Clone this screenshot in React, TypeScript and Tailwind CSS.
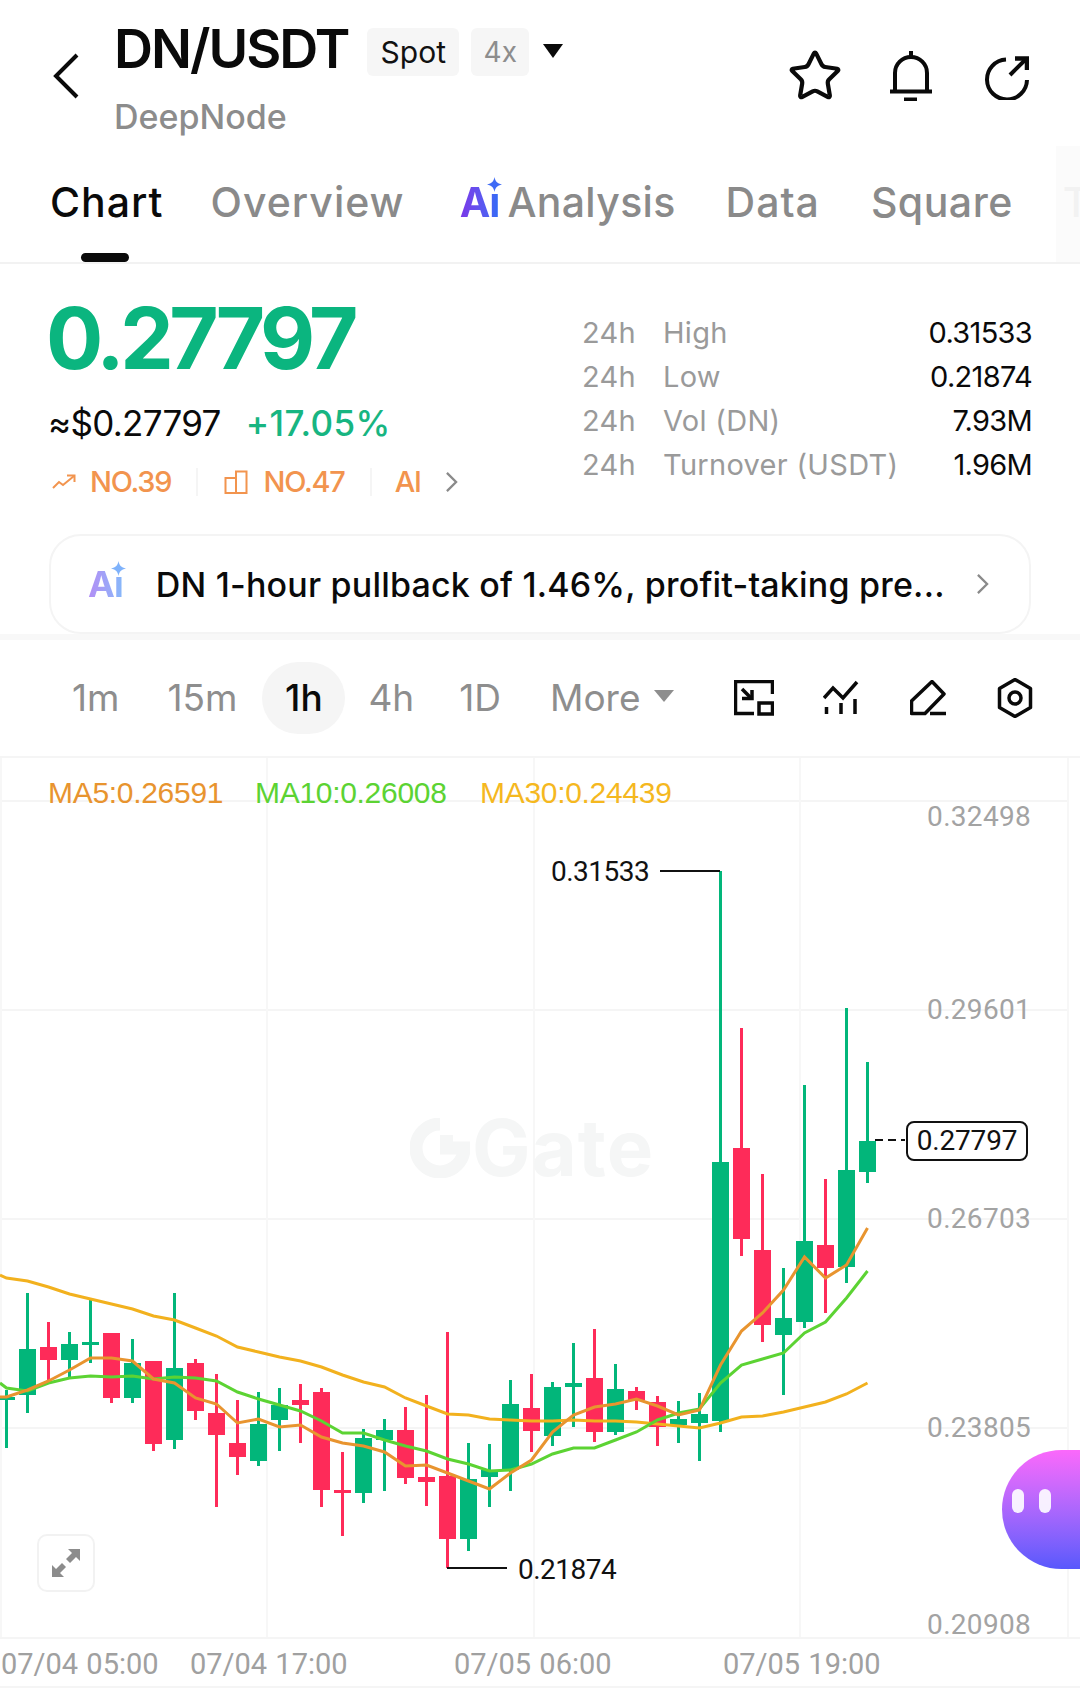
import { Star } from 'lucide-react'
import clsx from 'clsx'

const GREEN = '#02b67a'
const RED = '#fe2b59'

// wick top, body top, body bottom, wick bottom, up
const candles: [number, number, number, number, boolean][] = [
  [1390, 1397, 1400, 1448, true],
  [1293, 1349, 1395, 1413, true],
  [1322, 1347, 1360, 1380, false],
  [1332, 1344, 1360, 1378, true],
  [1300, 1342, 1345, 1363, true],
  [1333, 1333, 1398, 1403, false],
  [1339, 1363, 1398, 1403, true],
  [1361, 1361, 1444, 1451, false],
  [1293, 1368, 1440, 1449, true],
  [1359, 1363, 1411, 1420, false],
  [1374, 1413, 1435, 1507, false],
  [1400, 1443, 1457, 1475, false],
  [1392, 1424, 1461, 1466, true],
  [1388, 1405, 1420, 1451, true],
  [1384, 1400, 1405, 1443, false],
  [1388, 1392, 1490, 1507, false],
  [1452, 1490, 1493, 1536, false],
  [1429, 1438, 1493, 1503, true],
  [1419, 1430, 1440, 1491, true],
  [1407, 1430, 1478, 1484, false],
  [1395, 1477, 1482, 1506, false],
  [1332, 1476, 1539, 1568, false],
  [1443, 1479, 1539, 1551, true],
  [1444, 1470, 1477, 1507, true],
  [1380, 1404, 1470, 1491, true],
  [1374, 1408, 1431, 1452, false],
  [1382, 1387, 1436, 1446, true],
  [1343, 1383, 1387, 1427, true],
  [1329, 1378, 1432, 1442, false],
  [1364, 1389, 1432, 1435, true],
  [1387, 1391, 1400, 1410, false],
  [1396, 1402, 1427, 1446, false],
  [1401, 1419, 1425, 1443, true],
  [1393, 1414, 1423, 1461, true],
  [871, 1162, 1421, 1432, true],
  [1028, 1148, 1239, 1256, false],
  [1174, 1250, 1325, 1342, false],
  [1268, 1318, 1335, 1395, true],
  [1085, 1241, 1322, 1328, true],
  [1179, 1245, 1268, 1313, false],
  [1008, 1170, 1267, 1283, true],
  [1062, 1141, 1172, 1183, true],
]

const ma30 = [1278, 1281, 1287, 1294, 1299, 1304, 1309, 1316, 1320, 1328, 1336, 1347, 1352, 1357, 1361, 1367, 1375, 1382, 1387, 1398, 1406, 1414, 1415, 1419, 1420, 1421, 1421, 1420, 1421, 1421, 1422, 1424, 1426, 1428, 1423, 1417, 1416, 1412, 1407, 1402, 1394, 1383]
const ma10 = [1388, 1391, 1383, 1378, 1376, 1377, 1376, 1379, 1377, 1378, 1381, 1392, 1399, 1405, 1411, 1421, 1433, 1433, 1440, 1446, 1451, 1459, 1464, 1471, 1470, 1464, 1454, 1448, 1448, 1440, 1432, 1420, 1413, 1409, 1383, 1365, 1359, 1353, 1333, 1322, 1298, 1271]
const ma5 = [1397, 1390, 1381, 1370, 1358, 1358, 1361, 1379, 1383, 1398, 1404, 1423, 1419, 1427, 1425, 1437, 1443, 1446, 1452, 1466, 1465, 1473, 1481, 1489, 1473, 1460, 1432, 1415, 1407, 1404, 1399, 1406, 1415, 1410, 1365, 1331, 1313, 1290, 1257, 1278, 1265, 1228]

const candleX = (i: number) => 6.5 + 21 * i
const linePoints = (ys: number[], startY: number) =>
  `0,${startY} ` + ys.map((y, i) => `${candleX(i)},${y}`).join(' ')

// top is measured from the top of the chart box
const priceAxis = [
  { label: '0.32498', top: 42 },
  { label: '0.29601', top: 235 },
  { label: '0.26703', top: 444 },
  { label: '0.23805', top: 653 },
  { label: '0.20908', top: 850 },
]

const timeAxis = [
  { label: '07/04 05:00', left: 1 },
  { label: '07/04 17:00', left: 190 },
  { label: '07/05 06:00', left: 454 },
  { label: '07/05 19:00', left: 723 },
]

function AiMark({ className, gradient }: { className?: string; gradient: string }) {
  return (
    <span className={clsx('relative inline-block font-bold leading-none', className)}>
      <span className={clsx('bg-clip-text tracking-[-1px] text-transparent', gradient)}>Aı</span>
      <svg viewBox="0 0 16 16" className="absolute right-[-3px] top-[-5px] h-[15px] w-[15px]">
        <path d="M8 0C8.8 4.6 10.8 7 16 8C10.8 9 8.8 11.4 8 16C7.2 11.4 5.2 9 0 8C5.2 7 7.2 4.6 8 0Z" fill="currentColor" />
      </svg>
    </span>
  )
}

function Chevron({ className }: { className?: string }) {
  return (
    <svg viewBox="0 0 14 24" fill="none" stroke="#8a8a8a" strokeWidth="2.500" className={clsx('h-[22px] w-[13px]', className)}>
      <path d="M2 2L12 12L2 22" />
    </svg>
  )
}

function Header() {
  return (
    <header className="flex h-[146px] items-start pl-[53px] pr-[51px]">
      <svg viewBox="0 0 26 46" fill="none" stroke="#0a0a0a" strokeWidth="4" className="mr-[35px] mt-[53px] h-[46px] w-[26px] shrink-0">
        <path d="M24 2L3 23L24 44" />
      </svg>
      <div className="mt-[18px]">
        <div className="flex items-start">
          <h1 className="text-[54px] font-semibold leading-[62px] tracking-[-2px] text-[#0a0a0a]">DN/USDT</h1>
          <span className="ml-[19px] mt-[10px] flex h-[48px] w-[92px] items-center justify-center rounded-[6px] bg-[#f6f6f6] text-[30px] text-[#111]">Spot</span>
          <span className="ml-[12px] mt-[10px] flex h-[48px] w-[58px] items-center justify-center rounded-[6px] bg-[#f6f6f6] text-[28px] text-[#8d8d8d]">4x</span>
          <svg viewBox="0 0 20 14" className="ml-[14px] mt-[26px] h-[14px] w-[20px]">
            <path d="M0 0H20L10 14Z" fill="#0a0a0a" />
          </svg>
        </div>
        <div className="mt-[17px] text-[34px] font-medium leading-[40px] text-[#8c8c8c]">DeepNode</div>
      </div>
      <div className="ml-auto mt-[48px] flex items-center">
        <Star size={56} strokeWidth={1.8} className="text-[#0a0a0a]" />
        <svg viewBox="0 0 44 50" fill="none" stroke="#0a0a0a" strokeWidth="4" className="ml-[46px] h-[50px] w-[44px]">
          <path d="M22 0V6" />
          <path d="M6 40V22a16 16 0 0 1 32 0v18" />
          <path d="M1 40.500H43" />
          <path d="M15 48.500H28" />
        </svg>
        <svg viewBox="0 0 44 44" fill="none" stroke="#0a0a0a" strokeWidth="4" className="ml-[52px] mt-[3px] h-[44px] w-[44px]">
          <path d="M21 3.500A20 20 0 1 0 42 24" />
          <path d="M25 19L41 3" />
          <path d="M30 2.500H42V14" strokeWidth="4.500" />
        </svg>
      </div>
    </header>
  )
}

function Tabs() {
  return (
    <nav className="relative flex h-[118px] items-start overflow-hidden border-b-2 border-[#f2f2f2] pl-[50px] pt-[32px] text-[41px] font-medium leading-[48px] tracking-[1px] text-[#8a8a8a]">
      <div className="text-[#0a0a0a]">Chart</div>
      <div className="ml-[47px]">Overview</div>
      <div className="ml-[55px] flex items-center">
        <AiMark className="text-[#3f6bf5]" gradient="bg-gradient-to-r from-[#7a35e8] to-[#2f6bf6]" />
        <span className="ml-[8px] tracking-[0.3px]">Analysis</span>
      </div>
      <div className="ml-[50px]">Data</div>
      <div className="ml-[51px] tracking-[0.5px]">Square</div>
      <div className="ml-[50px] text-[#d0d0d0]">T</div>
      <div className="absolute bottom-0 right-0 top-0 w-[24px] bg-[#fafafa]/80" />
      <div className="absolute bottom-0 left-[81px] h-[9px] w-[48px] rounded-[5px] bg-[#0a0a0a]" />
    </nav>
  )
}

function Stat({ label, value }: { label: string; value: string }) {
  return (
    <div className="flex h-[44px] items-center text-[29px] tracking-[0.3px]">
      <span className="w-[81px] text-[#9a9a9a]">24h</span>
      <span className="text-[#9a9a9a]">{label}</span>
      <span className="ml-auto tracking-[-0.7px] text-[#0a0a0a]">{value}</span>
    </div>
  )
}

function Summary() {
  return (
    <section className="flex h-[270px] justify-between pl-[49px] pr-[48px]">
      <div>
        <div className="ml-[-3px] mt-[27px] text-[85px] font-bold leading-[96px] tracking-[-4.5px] text-[#0bb57f]">0.27797</div>
        <div className="mt-[15px] flex items-center text-[35px] leading-[42px]">
          <span className="ml-[-1px] tracking-[-0.7px] text-[#0a0a0a]">≈$0.27797</span>
          <span className="ml-[25px] font-medium tracking-[0.4px] text-[#17b581]">+17.05%</span>
        </div>
        <div className="mt-[20px] flex items-center text-[29px] font-medium leading-[36px] tracking-[-1.2px] text-[#f2944e]">
          <svg viewBox="0 0 24 16" fill="none" stroke="currentColor" strokeWidth="2" className="ml-[3px] h-[16px] w-[24px]">
            <path d="M1 14L7 8L11 11L22 2" />
            <path d="M15 1.500H22.500V8" />
          </svg>
          <span className="ml-[14px]">NO.39</span>
          <span className="ml-[25px] h-[28px] w-[2px] bg-[#f5f5f5]" />
          <svg viewBox="0 0 24 24" fill="none" stroke="currentColor" strokeWidth="2" className="ml-[26px] h-[24px] w-[24px]">
            <path d="M12 8H1.500V23H22.500V1.500H12V23" />
          </svg>
          <span className="ml-[15px]">NO.47</span>
          <span className="ml-[25px] h-[28px] w-[2px] bg-[#f5f5f5]" />
          <span className="ml-[23px]">AI</span>
          <Chevron className="ml-[24px]" />
        </div>
      </div>
      <div className="mt-[47px] w-[450px]">
        <Stat label="High" value="0.31533" />
        <Stat label="Low" value="0.21874" />
        <Stat label="Vol (DN)" value="7.93M" />
        <Stat label="Turnover (USDT)" value="1.96M" />
      </div>
    </section>
  )
}

function Banner() {
  return (
    <div className="border-b-[6px] border-[#f8f8f8] px-[49px]">
      <div className="flex h-[100px] items-center rounded-[32px] border-2 border-[#f4f4f4] pl-[37px] pr-[40px]">
        <AiMark className="text-[36px] text-[#7fb2fb]" gradient="bg-gradient-to-r from-[#b28df5] to-[#85b8fa]" />
        <span className="ml-[33px] whitespace-nowrap text-[34px] font-medium tracking-[0.2px] text-[#0a0a0a]">
          DN 1-hour pullback of 1.46%, profit-taking pre...
        </span>
        <Chevron className="ml-auto" />
      </div>
    </div>
  )
}

function Toolbar() {
  return (
    <div className="flex h-[118px] items-center border-b-2 border-[#f5f5f5] text-[37px] text-[#8e8e8e]">
      <span className="ml-[72px]">1m</span>
      <span className="ml-[48px]">15m</span>
      <span className="ml-[25px] flex h-[72px] w-[83px] items-center justify-center rounded-full bg-[#f5f5f5] font-medium text-[#0a0a0a]">1h</span>
      <span className="ml-[23px]">4h</span>
      <span className="ml-[45px]">1D</span>
      <span className="ml-[49px]">More</span>
      <svg viewBox="0 0 20 12" className="mb-[4px] ml-[14px] h-[12px] w-[20px]">
        <path d="M0 0H20L10 12Z" fill="#8e8e8e" />
      </svg>
      <svg viewBox="0 0 40 36" fill="none" stroke="#0a0a0a" strokeWidth="3.500" className="ml-[60px] h-[36px] w-[40px]">
        <path d="M20 33.500H1.500V1.500H38.500V14" />
        <rect x="25" y="23" width="13.500" height="11" />
        <path d="M8 9L17 18" />
        <path d="M8 18.500H18V10" />
      </svg>
      <svg viewBox="0 0 36 36" fill="none" stroke="#0a0a0a" strokeWidth="3.500" className="ml-[49px] h-[36px] w-[36px]">
        <path d="M1 18L10 8L20 18L34 2" />
        <path d="M3.500 27V34M18 23V34M32 19V34" />
      </svg>
      <svg viewBox="0 0 36 36" fill="none" stroke="#0a0a0a" strokeWidth="3.500" className="ml-[51px] h-[36px] w-[36px]">
        <path d="M22 1.500L34 14L15 33.500H1.500V21Z" strokeLinejoin="round" />
        <path d="M20 33.500H36" />
      </svg>
      <svg viewBox="0 0 36 40" fill="none" stroke="#0a0a0a" strokeWidth="3.500" className="ml-[51px] h-[40px] w-[36px]">
        <path d="M18 1.500L33.500 10.500V29.500L18 38.500L2.500 29.500V10.500Z" strokeLinejoin="round" />
        <circle cx="18" cy="20" r="6" />
      </svg>
    </div>
  )
}

function CandleChart() {
  return (
    <svg viewBox="0 758 1080 879" className="absolute inset-0 h-full w-full">
      {[801, 1010, 1219, 1428].map((y) => (
        <line key={y} x1="0" x2="1068" y1={y} y2={y} stroke="#f5f5f5" strokeWidth="2" />
      ))}
      {[1, 267, 534, 800, 1068].map((x) => (
        <line key={x} x1={x} x2={x} y1="758" y2="1637" stroke="#f7f7f7" strokeWidth="2" />
      ))}
      {candles.map(([wickTop, bodyTop, bodyBot, wickBot, up], i) => {
        const x = candleX(i)
        const color = up ? GREEN : RED
        return (
          <g key={i}>
            <rect x={x - 1.5} y={wickTop} width="3" height={wickBot - wickTop} fill={color} />
            <rect x={x - 8.5} y={bodyTop} width="17" height={bodyBot - bodyTop} fill={color} />
          </g>
        )
      })}
      <polyline points={linePoints(ma30, 1275)} fill="none" stroke="#f2b11e" strokeWidth="3" />
      <polyline points={linePoints(ma10, 1383)} fill="none" stroke="#5cd333" strokeWidth="3" />
      <polyline points={linePoints(ma5, 1397)} fill="none" stroke="#e8942f" strokeWidth="3" />
      {/* high / low / last price leaders */}
      <path d="M660 871H720" stroke="#111" strokeWidth="2" />
      <path d="M447 1568H507" stroke="#111" strokeWidth="2" />
      <path d="M875 1140H905" stroke="#111" strokeWidth="2" strokeDasharray="8 5" />
    </svg>
  )
}

function Chart() {
  return (
    <div className="relative h-[879px] font-['Roboto',sans-serif] text-[28px]">
      <CandleChart />
      <div className="absolute left-[48px] top-[19px] flex font-['Liberation_Sans',sans-serif] text-[30px] leading-[32px] tracking-[-0.3px]">
        <span className="w-[207px] text-[#e8942f]">MA5:0.26591</span>
        <span className="w-[225px] text-[#5cd333]">MA10:0.26008</span>
        <span className="text-[#f5b81f]">MA30:0.24439</span>
      </div>
      {priceAxis.map((p) => (
        <span key={p.label} style={{ top: p.top }} className="absolute right-[49px] leading-[34px] tracking-[0.3px] text-[#a3a3a3]">
          {p.label}
        </span>
      ))}
      <span className="absolute left-[551px] top-[97px] leading-[34px] tracking-[-0.5px] text-[#111]">0.31533</span>
      <span className="absolute left-[518px] top-[795px] leading-[34px] tracking-[-0.5px] text-[#111]">0.21874</span>
      <span className="absolute left-[906px] top-[363px] flex h-[40px] w-[122px] items-center justify-center rounded-[8px] border-2 border-[#111] bg-white tracking-[-0.2px] text-[#111]">
        0.27797
      </span>
      {/* watermark */}
      <div className="absolute left-[410px] top-[358px] flex items-center text-[#f5f6f6]">
        <svg viewBox="0 0 60 60" className="h-[60px] w-[60px]">
          <path d="M30 6A24 24 0 1 0 54 30H30" fill="none" stroke="currentColor" strokeWidth="13" />
          <rect x="30" y="17" width="13" height="13" fill="currentColor" />
        </svg>
        <span className="ml-[2px] font-['Inter',sans-serif] text-[78px] font-bold leading-[64px] tracking-[1px]">Gate</span>
      </div>
      <button className="absolute left-[37px] top-[776px] flex h-[58px] w-[58px] items-center justify-center rounded-[10px] border-2 border-[#f2f2f2] bg-white">
        <svg viewBox="0 0 28 28" className="h-[28px] w-[28px]" fill="#8c8c8c">
          <path d="M16 0H28V12L24 8L18 14L14 10L20 4Z" />
          <path d="M0 28V16L4 20L10 14L14 18L8 24L12 28Z" />
        </svg>
      </button>
      <div className="absolute right-0 top-[692px] flex h-[119px] w-[78px] items-center gap-[15px] rounded-l-[60px] bg-gradient-to-b from-[#fb68fb] to-[#5858fc] pb-[18px] pl-[10px]">
        <span className="h-[24px] w-[12px] rounded-full bg-white/90" />
        <span className="h-[24px] w-[12px] rounded-full bg-white/90" />
      </div>
    </div>
  )
}

function TimeAxis() {
  return (
    <div className="relative h-[51px] border-b-2 border-t-2 border-[#f5f5f5] font-['Roboto',sans-serif] text-[29px] text-[#a0a0a0] [word-spacing:1px]">
      {timeAxis.map((t) => (
        <span key={t.label} style={{ left: t.left }} className="absolute top-[7px] whitespace-pre leading-[36px]">
          {t.label}
        </span>
      ))}
    </div>
  )
}

export default function App() {
  return (
    <div className="h-[1691px] w-[1080px] overflow-hidden bg-white font-['Inter',sans-serif]">
      <Header />
      <Tabs />
      <Summary />
      <Banner />
      <Toolbar />
      <Chart />
      <TimeAxis />
    </div>
  )
}
